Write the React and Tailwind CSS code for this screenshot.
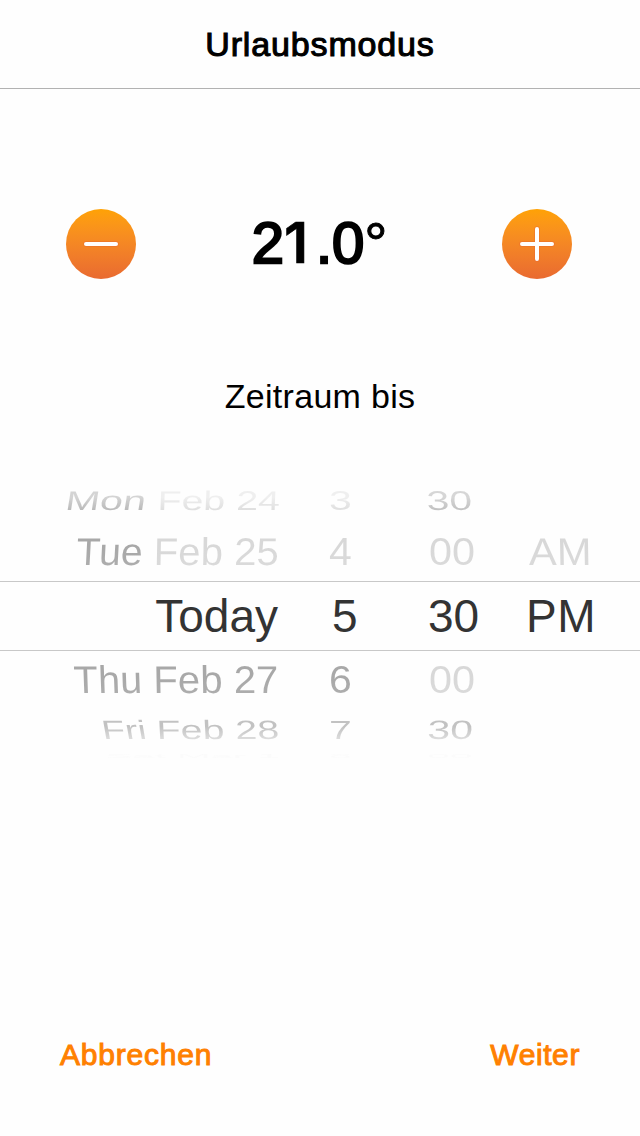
import React from 'react';

const FADE = {
  mon: 'from-[#d4d4d4] to-[#b8b8b8]',
  farTop: 'from-[#efefef] to-[#dedede]',
  farMid: 'from-[#d6d6d6] to-[#c0c0c0]',
  near: 'from-[#d8d8d8] to-[#dadada]',
  nearDark: 'from-[#a8a8a8] to-[#adadad]',
  farBottom: 'from-[#c2c2c2] to-[#dedede]',
  last: 'from-[#fbfbfb] to-[#fbfbfb]',
};

// sx / sy / skew bend a label around the wheel, pivoting on its baseline
function Label({ children, fade, sx = 1, sy = 1, skew = 0, right = false, className = '' }) {
  return (
    <span
      className={`inline-block whitespace-pre bg-linear-to-b from-35% to-85% bg-clip-text text-transparent ${FADE[fade]} ${right ? 'origin-[100%_85%]' : 'origin-[0%_85%]'} ${className}`}
      style={{ transform: `skewX(${skew}deg) scale(${sx}, ${sy})` }}
    >
      {children}
    </span>
  );
}

function WheelRow({ className, children }) {
  return (
    <div className={`grid grid-cols-[280px_49px_98px_102px_111px] items-start text-[41px] leading-none ${className}`}>
      {children}
    </div>
  );
}

function RoundButton({ plus, label }) {
  return (
    <button
      aria-label={label}
      className="w-[70px] h-[70px] rounded-full bg-linear-to-b from-[#ffa204] to-[#e96a30] flex items-center justify-center"
    >
      <svg width="42" height="42" viewBox="0 0 42 42" fill="none" strokeLinecap="round">
        <path d={plus ? 'M6 21H36M21 6V36' : 'M6 21H36'} stroke="#e96a30" strokeOpacity="0.55" strokeWidth="5.5" />
        <path d={plus ? 'M6 21H36M21 6V36' : 'M6 21H36'} stroke="#fff" strokeWidth="4" />
      </svg>
    </button>
  );
}

export default function App() {
  return (
    <div className="w-[640px] h-[1136px] bg-[#fefefe] text-black overflow-hidden flex flex-col font-['Liberation_Sans',Arial,sans-serif]">
      <header className="h-[89px] shrink-0 border-b border-[#b2b2b2] pt-[27px] text-center">
        <h1 className="text-[34px] leading-[34px] tracking-[0.85px] font-normal [-webkit-text-stroke:1.1px_#000]">Urlaubsmodus</h1>
      </header>

      {/* Temperature */}
      <div className="mt-[120px] h-[70px] shrink-0 pl-[66px] pr-[68px] flex items-center justify-between">
        <RoundButton label="Kälter" />
        <div className="text-[58px] leading-[68px] pb-[2px] whitespace-nowrap [-webkit-text-stroke:2.4px_#000]">
          2<span className="inline-block w-[32px] pr-[9px] font-['Inter'] font-semibold text-[57px] leading-none text-center [-webkit-text-stroke:0.6px_#000]">1</span>.0<span className="inline-block w-[22px] text-[58px] leading-none [-webkit-text-stroke:1px_#000]">°</span>
        </div>
        <RoundButton plus label="Wärmer" />
      </div>

      <h2 className="mt-[100px] h-[34px] shrink-0 text-center text-[34px] leading-[34px] tracking-[0.3px] font-normal">Zeitraum bis</h2>

      {/* Date wheel */}
      <div className="mt-[63px] h-[300px] shrink-0">
        <WheelRow className="h-[55px]">
          <div className="flex justify-end">
            <Label fade="mon" right sx={1.01} sy={0.66} skew={-9}>Mon</Label>
            <Label fade="farTop" right sx={0.96} sy={0.66} skew={-2} className="ml-[8px]">Feb 24</Label>
          </div>
          <span />
          <Label fade="farTop" className="justify-self-start" sy={0.66}>3</Label>
          <Label fade="farMid" className="justify-self-start" sy={0.66} skew={3}>30</Label>
        </WheelRow>
        <WheelRow className="h-[50px]">
          <div className="flex justify-end">
            <Label fade="nearDark" right sx={0.96} sy={0.94} skew={-3}>Tue</Label>
            <Label fade="near" right sx={0.98} sy={0.94} skew={-1} className="ml-[9px] mr-px">Feb 25</Label>
          </div>
          <span />
          <Label fade="near" className="justify-self-start" sy={0.94}>4</Label>
          <Label fade="near" className="justify-self-start ml-[2px]" sx={1.01} sy={0.94}>00</Label>
          <Label fade="near" className="justify-self-start" sx={1.02} sy={0.94} skew={1}>AM</Label>
        </WheelRow>

        <div className="h-[70px] border-y border-[#c8c8c8] pt-[11px] grid grid-cols-[278px_54px_96px_98px_114px] text-[46px] leading-none text-[#333]">
          <span className="text-right">Today</span>
          <span />
          <span>5</span>
          <span>30</span>
          <span className="tracking-[0.6px]">PM</span>
        </div>

        <WheelRow className="mt-[8px] h-[46px]">
          <div className="flex justify-end">
            <Label fade="nearDark" right sx={0.97} sy={0.94} skew={2}>Thu</Label>
            <Label fade="nearDark" right sx={0.98} sy={0.94} skew={1} className="ml-[9px] mr-px">Feb 27</Label>
          </div>
          <span />
          <Label fade="nearDark" className="justify-self-start" sy={0.94}>6</Label>
          <Label fade="near" className="justify-self-start ml-[2px]" sx={1.01} sy={0.94}>00</Label>
        </WheelRow>
        <WheelRow className="h-[18px]">
          <div className="flex justify-end">
            <Label fade="farBottom" right sx={0.93} sy={0.65} skew={10}>Fri</Label>
            <Label fade="farBottom" right sx={0.96} sy={0.65} skew={3} className="ml-[5px]">Feb 28</Label>
          </div>
          <span />
          <Label fade="farBottom" className="justify-self-start" sy={0.65}>7</Label>
          <Label fade="farBottom" className="justify-self-start" sy={0.65} skew={-3}>30</Label>
        </WheelRow>
        <WheelRow className="h-[20px]">
          <div className="flex justify-end">
            <Label fade="last" right sx={0.98} sy={0.12}>Sat Mar 1</Label>
          </div>
          <span />
          <Label fade="last" className="justify-self-start" sy={0.12}>8</Label>
          <Label fade="last" className="justify-self-start" sy={0.12}>00</Label>
        </WheelRow>
      </div>

      <footer className="mt-auto h-[96px] shrink-0 pl-[60px] pr-[60px] flex items-start justify-between text-[30px] leading-[30px] text-[#ff8000] [-webkit-text-stroke:1px_#ff8000]">
        <button className="tracking-[0.8px]">Abbrechen</button>
        <button className="tracking-[0.6px]">Weiter</button>
      </footer>
    </div>
  );
}
